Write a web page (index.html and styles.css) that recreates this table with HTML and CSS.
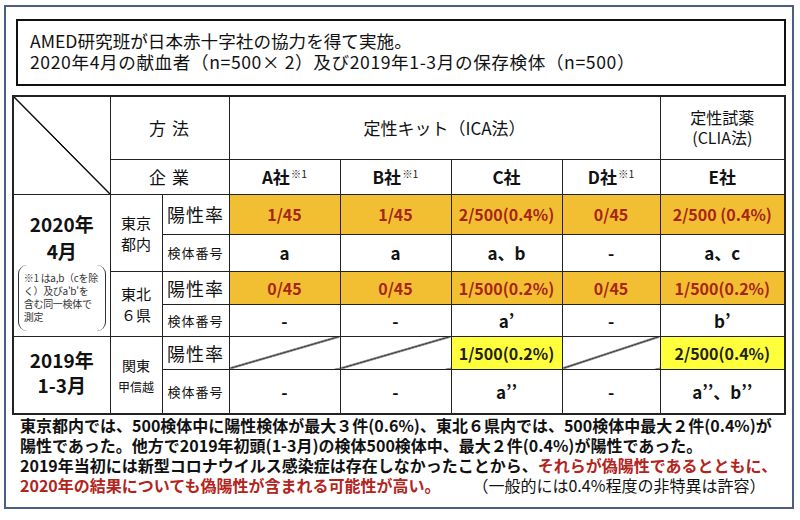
FILE: index.html
```html
<!DOCTYPE html>
<html lang="ja">
<head>
<meta charset="utf-8">
<link rel="stylesheet" href="styles.css">
</head>
<body>
<div class="frame">
  <div class="title-box">
    <p>AMED研究班が日本赤十字社の協力を得て実施。</p>
    <p class="wide">2020年4月の献血者（n=500× 2）及び2019年1-3月の保存検体（n=500）</p>
  </div>
  <table class="grid">
    <colgroup>
      <col class="c-year"><col class="c-region"><col class="c-metric">
      <col class="c-val"><col class="c-val"><col class="c-val"><col class="c-d"><col class="c-e">
    </colgroup>
    <tr class="r-h1">
      <td rowspan="2" class="corner"></td>
      <td colspan="2" class="hd spaced">方 法</td>
      <td colspan="4" class="hd">定性キット（ICA法）</td>
      <td class="hd small">定性試薬<br>(CLIA法)</td>
    </tr>
    <tr class="r-h2">
      <td colspan="2" class="hd spaced">企 業</td>
      <td class="co">A社<sup>※1</sup></td>
      <td class="co">B社<sup>※1</sup></td>
      <td class="co">C社</td>
      <td class="co">D社<sup>※1</sup></td>
      <td class="co">E社</td>
    </tr>
    <tr class="r-a">
      <td rowspan="4" class="year y2020">
        <div class="yr">2020年<br>4月</div>
        <div class="note">※1 はa,b（cを除<br>く）及びa'b'を<br>含む同一検体で<br>測定</div>
      </td>
      <td rowspan="2" class="region">東京<br>都内</td>
      <td class="metric">陽性率</td>
      <td class="pos">1/45</td>
      <td class="pos">1/45</td>
      <td class="pos">2/500(0.4%)</td>
      <td class="pos">0/45</td>
      <td class="pos">2/500 (0.4%)</td>
    </tr>
    <tr class="r-b">
      <td class="id-label">検体番号</td>
      <td class="id">a</td>
      <td class="id">a</td>
      <td class="id">a、b</td>
      <td class="id">-</td>
      <td class="id">a、c</td>
    </tr>
    <tr class="r-c">
      <td rowspan="2" class="region">東北<br>６県</td>
      <td class="metric">陽性率</td>
      <td class="pos">0/45</td>
      <td class="pos">0/45</td>
      <td class="pos">1/500(0.2%)</td>
      <td class="pos">0/45</td>
      <td class="pos">1/500(0.2%)</td>
    </tr>
    <tr class="r-d">
      <td class="id-label">検体番号</td>
      <td class="id">-</td>
      <td class="id">-</td>
      <td class="id">a’</td>
      <td class="id">-</td>
      <td class="id">b’</td>
    </tr>
    <tr class="r-e">
      <td rowspan="2" class="year y2019"><div class="yr">2019年<br>1-3月</div></td>
      <td rowspan="2" class="region"><span class="kanto">関東</span><br><span class="koshin">甲信越</span></td>
      <td class="metric">陽性率</td>
      <td class="slash"></td>
      <td class="slash"></td>
      <td class="yel">1/500(0.2%)</td>
      <td class="slash"></td>
      <td class="yel">2/500(0.4%)</td>
    </tr>
    <tr class="r-f">
      <td class="id-label">検体番号</td>
      <td class="id">-</td>
      <td class="id">-</td>
      <td class="id">a’’</td>
      <td class="id">-</td>
      <td class="id">a’’、b’’</td>
    </tr>
  </table>
  <div class="summary">
    <p>東京都内では、500検体中に陽性検体が最大３件(0.6%)、東北６県内では、500検体中最大２件(0.4%)が</p>
    <p>陽性であった。他方で2019年初頭(1-3月)の検体500検体中、最大２件(0.4%)が陽性であった。</p>
    <p>2019年当初には新型コロナウイルス感染症は存在しなかったことから、<span class="red">それらが偽陽性であるとともに、</span></p>
    <p><span class="red">2020年の結果についても偽陽性が含まれる可能性が高い。</span><span class="aside">（一般的には0.4%程度の非特異は許容）</span></p>
  </div>
</div>
</body>
</html>
```

FILE: styles.css
```css
* { box-sizing: border-box; }
html, body { margin: 0; padding: 0; background: #fff; }
body {
  font-family: "Noto Sans CJK JP", "Noto Sans", sans-serif;
  color: #111;
}
.frame {
  margin: 5px 0 0 4px;
  width: 790px;
  height: 504px;
  border: 2px solid #4b5f83;
}
.title-box {
  margin: 12px 0 0 10px;
  width: 770px;
  height: 67px;
  border: 2px solid #111;
  padding: 9px 0 0 12px;
  font-size: 17.6px;
  line-height: 21px;
}
.title-box p { margin: 0; }
.title-box .wide { letter-spacing: 0.6px; }

.grid {
  margin: 9px 0 0 6px;
  width: 772px;
  border-collapse: collapse;
  table-layout: fixed;
  border: 2px solid #222;
}
.c-year { width: 97px; }
.c-region { width: 52px; }
.c-metric { width: 67px; }
.c-val { width: 111px; }
.c-d { width: 98px; }
.c-e { width: 125px; }

.grid td {
  border: 1px solid #222;
  padding: 0;
  text-align: center;
  vertical-align: middle;
}
.r-h1 { height: 63px; }
.r-h2 { height: 35px; }
.r-a { height: 40px; }
.r-b { height: 37px; }
.r-c { height: 33px; }
.r-d { height: 32px; }
.r-e { height: 33px; }
.r-f { height: 45px; }

.corner {
  background: linear-gradient(to top right,
    transparent calc(50% - 1.1px), #111 calc(50% - 0.35px),
    #111 calc(50% + 0.35px), transparent calc(50% + 1.1px));
}
.slash {
  background: linear-gradient(to bottom right,
    transparent calc(50% - 1.1px), #111 calc(50% - 0.35px),
    #111 calc(50% + 0.35px), transparent calc(50% + 1.1px));
}
.hd {
  font-size: 17px;
  line-height: 21px;
}
.hd.small { font-size: 16px; line-height: 20px; padding-bottom: 2px; }
.spaced { letter-spacing: 1px; }
.co {
  font-size: 17px;
  font-weight: bold;
}
.co sup {
  font-size: 10.5px;
  font-weight: normal;
  vertical-align: 6px;
  margin-left: 1px;
  color: #222;
}
.metric { font-size: 18px; letter-spacing: 1px; }
.id-label { font-size: 13px; letter-spacing: 1px; }
.pos {
  background: #f1bf31;
  color: #a8251b;
  font-weight: bold;
  font-size: 16px;
}
.yel {
  background: #ffff3c;
  color: #222;
  font-weight: bold;
  font-size: 16px;
}
.id {
  font-weight: bold;
  font-size: 17px;
}
.region {
  font-size: 15px;
  line-height: 21px;
}
.kanto { font-size: 14px; line-height: 17px; }
.koshin { font-size: 12px; line-height: 15px; }
.grid td.year { vertical-align: top; }
.grid td.y2020 { padding-top: 15px; }
.yr {
  font-size: 19px;
  font-weight: bold;
  line-height: 27px;
}
.grid td.y2019 {
  vertical-align: middle;
  border-top: 1px dashed #222;
  padding-bottom: 6px;
}
.y2019 .yr { line-height: 25px; }
.note {
  margin: 1px auto 0;
  width: 88px;
  height: 66px;
  border-left: 1.5px solid #333;
  border-right: 1.5px solid #333;
  border-radius: 9px;
  padding: 6px 0 0 5px;
  text-align: left;
  font-size: 10px;
  line-height: 13px;
  color: #333;
  letter-spacing: -0.3px;
  white-space: nowrap;
}

.summary {
  margin: 0 0 0 14px;
  font-size: 16px;
  font-weight: bold;
  line-height: 20px;
  white-space: nowrap;
}
.summary p { margin: 0; }
.red { color: #b3241c; }
.aside { font-weight: normal; margin-left: 40px; }
```
